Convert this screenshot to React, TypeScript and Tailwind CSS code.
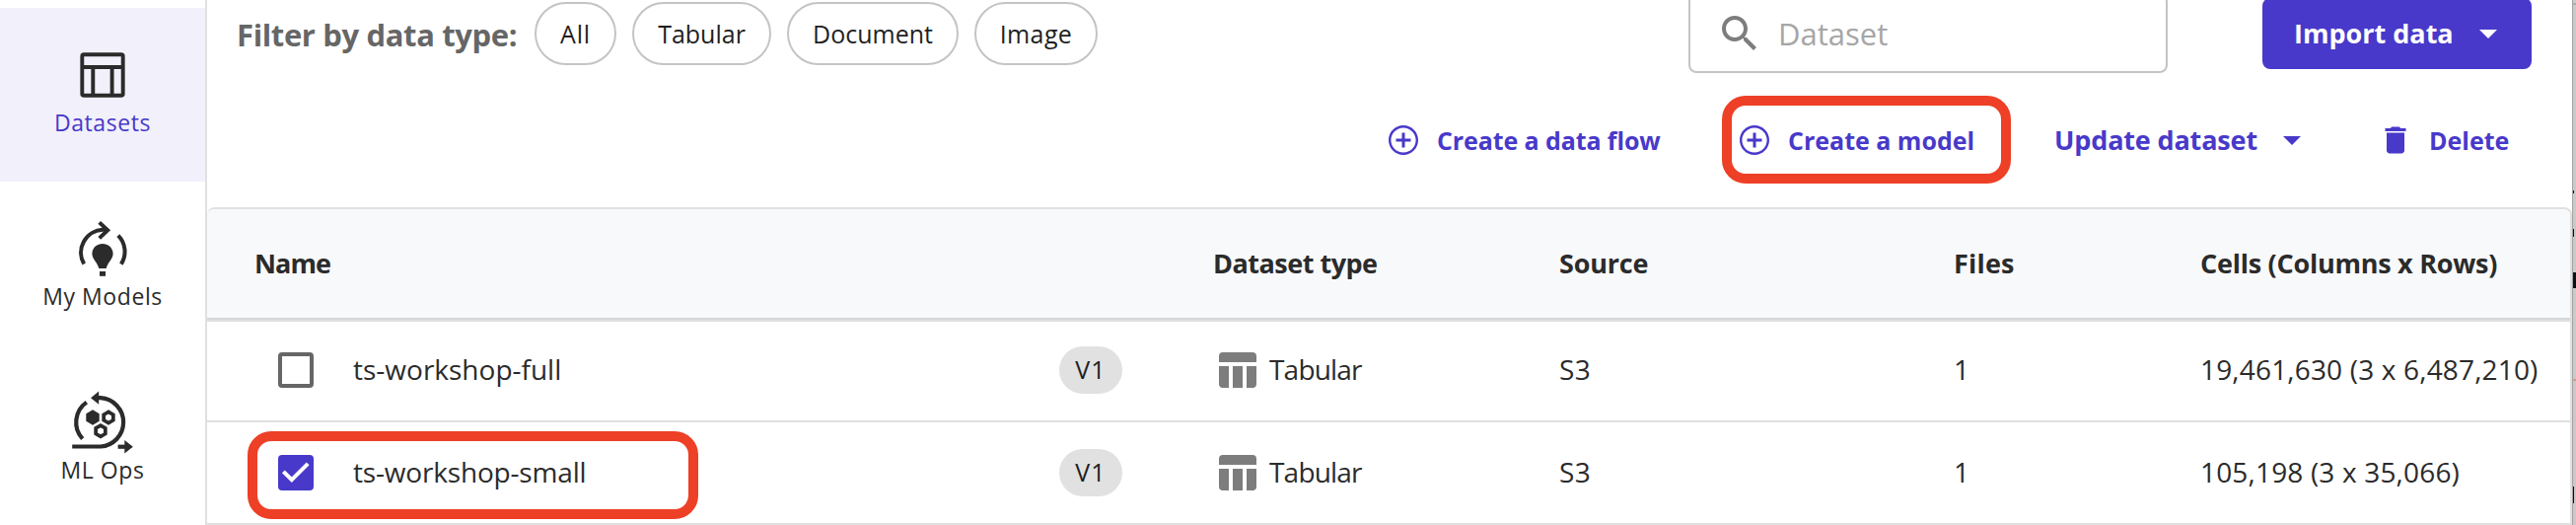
import type { ReactNode } from 'react';

function DatasetsIcon() {
  return (
    <svg className="size-16 shrink-0" viewBox="0 0 64 64" fill="none" stroke="#2b2b2b" strokeWidth="3.9">
      <rect x="11.3" y="11.2" width="41.4" height="41.6" rx="1.8" />
      <path d="M11 24H53M22.3 24V53M41.6 24V53" />
    </svg>
  );
}

function ModelsIcon() {
  return (
    <svg className="size-16 shrink-0" viewBox="0 0 64 64" fill="none" stroke="#2b2b2b" strokeWidth="4">
      <path d="M13.2 47.6A23.2 23.2 0 0 1 32 12.8H37" />
      <path d="M28.7 5.4L37.2 13.3L28.7 21.4" />
      <path d="M47.8 18.6A23.2 23.2 0 0 1 50.8 47.6" />
      <path
        d="M32 27C26 27 21.4 31.4 21.4 37.3C21.4 42.5 26.6 45.6 28.3 51.9H35.7C37.4 45.6 42.6 42.5 42.6 37.3C42.6 31.4 38 27 32 27Z"
        fill="#2b2b2b"
        stroke="none"
      />
      <rect x="29" y="55" width="6" height="4.8" fill="#2b2b2b" stroke="none" />
    </svg>
  );
}

function OpsIcon() {
  return (
    <svg className="size-16 shrink-0 overflow-visible" viewBox="0 0 64 64" fill="none" stroke="#2b2b2b" strokeWidth="4.2">
      <path d="M1.2 56.5H30A24.7 24.7 0 0 0 30 7.2H25" />
      <path d="M20 7.2L28.2 .6V13.8Z" fill="#2b2b2b" stroke="none" />
      <path d="M15.8 11.6A24.7 24.7 0 0 0 11.7 48.6" />
      <path d="M47.6 56.7H56" />
      <path d="M62.8 56.7L54.3 49.9V63.5Z" fill="#2b2b2b" stroke="none" />
      <path d="M22 19.3L28.7 23.15V30.85L22 34.7L15.3 30.85V23.15Z" fill="#2b2b2b" stroke="none" />
      <path d="M38 21.4L42.85 24.2V29.8L38 32.6L33.15 29.8V24.2Z" strokeWidth="3.7" />
      <path d="M30 35.1L34.85 37.9V43.5L30 46.3L25.15 43.5V37.9Z" strokeWidth="3.7" />
    </svg>
  );
}

function PlusCircle() {
  return (
    <svg className="size-9 shrink-0" viewBox="0 0 24 24" fill="currentColor">
      <path d="M13 7h-2v4H7v2h4v4h2v-4h4v-2h-4V7zm-1-5C6.48 2 2 6.48 2 12s4.48 10 10 10 10-4.48 10-10S17.52 2 12 2zm0 18.4c-4.63 0-8.4-3.77-8.4-8.4s3.77-8.4 8.4-8.4 8.4 3.77 8.4 8.4-3.77 8.4-8.4 8.4z" />
    </svg>
  );
}

function Caret() {
  return (
    <svg className="h-[9px] w-[18px] shrink-0" viewBox="0 0 18 9" fill="currentColor">
      <path d="M0 0H18L9 9Z" />
    </svg>
  );
}

function TableIcon() {
  return (
    <svg className="h-9 w-[38px] shrink-0" viewBox="0 0 38 36" fill="#7d7d7d">
      <path d="M4 0H34A4 4 0 0 1 38 4V10H0V4A4 4 0 0 1 4 0ZM0 14H10V36H4A4 4 0 0 1 0 32ZM14 14H24V36H14ZM28 14H38V32A4 4 0 0 1 34 36H28Z" />
    </svg>
  );
}

function NavItem({ icon, label, active = false }: { icon: ReactNode; label: string; active?: boolean }) {
  return (
    <a
      className={`flex h-[176px] flex-col items-center pt-9 text-[23px] leading-8 tracking-[0.58px] ${
        active ? 'bg-[#f2f0fa] text-[#4839ca]' : 'text-[#2b2b2b]'
      }`}
    >
      {icon}
      <span>{label}</span>
    </a>
  );
}

function Row({ name, cells, checked = false, first = false }: { name: string; cells: string; checked?: boolean; first?: boolean }) {
  return (
    <div
      className={`relative grid h-[104px] grid-cols-[1020px_351px_400px_250px_1fr] items-center border-b-2 border-[#e0e0e0] text-[28px] leading-9 text-[#2b2b2b] ${
        first ? 'shadow-[inset_0_2px_0_#e0e0e0]' : ''
      }`}
    >
      <div className="flex items-center pl-[72px]">
        {checked ? (
          <span className="flex size-9 items-center justify-center rounded-[4px] bg-[#4839ca]">
            <svg className="size-9" viewBox="0 0 36 36" fill="none" stroke="#fff" strokeWidth="4">
              <path d="M5.4 16.8L13.8 25.2L30.2 8.8" />
            </svg>
          </span>
        ) : (
          <span className="size-9 rounded-[4px] border-4 border-[#666]" />
        )}
        <span className={`ml-10 pb-0.5 ${checked ? 'tracking-[-0.18px]' : ''}`}>{name}</span>
        <span className="mr-[92px] ml-auto flex h-12 w-16 items-center justify-center rounded-full bg-[#e1e1e1] pb-0.5 text-[25px] tracking-[1.2px] text-[#1f1f1f]">
          V1
        </span>
      </div>
      <div className="flex items-center gap-[13px] pl-1.5">
        <TableIcon />
        <span className="pb-0.5 tracking-[-0.8px]">Tabular</span>
      </div>
      <span className="pb-0.5 tracking-[0.5px]">S3</span>
      <span className="pb-0.5">1</span>
      <span className="pb-0.5 whitespace-nowrap tracking-[0.17px]">{cells}</span>
      {checked && <span className="absolute top-[9px] left-[41px] h-[89px] w-[457px] rounded-3xl border-10 border-[#ed4026]" />}
    </div>
  );
}

export default function App() {
  return (
    <div className="flex h-[532px] w-[2612px] overflow-hidden bg-white font-['Open_Sans','Noto_Sans',sans-serif]">
      <nav className="w-[210px] shrink-0 border-r-2 border-[#e0e0e0] pt-2">
        <NavItem icon={<DatasetsIcon />} label="Datasets" active />
        <NavItem icon={<ModelsIcon />} label="My Models" />
        <NavItem icon={<OpsIcon />} label="ML Ops" />
      </nav>

      <main className="flex w-[2398px] shrink-0 flex-col">
        <div className="-mt-1.5 flex h-20 shrink-0 items-center pr-[41px] pl-[30px]">
          <span className="w-[302px] pt-px text-[31px] leading-10 font-bold tracking-[-0.37px] whitespace-nowrap text-[#666]">
            Filter by data type:
          </span>
          <div className="flex gap-4 text-[25px] text-[#1f1f1f]">
            <span className="flex h-16 w-[83px] items-center justify-center rounded-full border-2 border-[#c4c4c4] pt-0.5 tracking-[0.8px]">All</span>
            <span className="flex h-16 w-[141px] items-center justify-center rounded-full border-2 border-[#c4c4c4] pt-0.5">Tabular</span>
            <span className="flex h-16 w-[174px] items-center justify-center rounded-full border-2 border-[#c4c4c4] pt-0.5">Document</span>
            <span className="flex h-16 w-[125px] items-center justify-center rounded-full border-2 border-[#c4c4c4] pt-0.5 tracking-[0.4px]">Image</span>
          </div>
          <div className="ml-auto flex h-20 w-[486px] items-center gap-[15px] rounded-lg border-2 border-[#c4c4c4] pl-[26px]">
            <svg className="size-12 shrink-0" viewBox="0 0 24 24" fill="#7d7d7d">
              <path d="M15.5 14h-.79l-.28-.27C15.41 12.59 16 11.11 16 9.5 16 5.91 13.09 3 9.5 3S3 5.91 3 9.5 5.91 16 9.5 16c1.61 0 3.09-.59 4.23-1.57l.27.28v.79l5 4.99L20.49 19l-4.99-5zm-6 0C7.01 14 5 11.99 5 9.5S7.01 5 9.5 5 14 7.01 14 9.5 11.99 14 9.5 14z" />
            </svg>
            <span className="text-[31px] text-[#a6a6a6]">Dataset</span>
          </div>
          <button className="ml-24 flex h-[72px] w-[273px] items-center justify-between rounded-lg bg-[#4839ca] pt-px pr-[35px] pl-8 text-[27px] font-bold text-white">
            Import data
            <Caret />
          </button>
        </div>

        <div className="flex h-[136px] shrink-0 items-center pl-[1195px] text-[25px] leading-9 font-bold whitespace-nowrap text-[#4839ca]">
          <button className="flex w-[356px] items-center gap-4">
            <PlusCircle />
            <span className="pb-px tracking-[-0.1px]">Create a data flow</span>
          </button>
          <button className="relative flex w-[322px] items-center gap-4">
            <PlusCircle />
            <span className="pb-px">Create a model</span>
            <span className="absolute -top-[27px] -left-[15px] h-[89px] w-[293px] rounded-3xl border-10 border-[#ed4026]" />
          </button>
          <button className="flex w-[328px] items-center text-[27px]">
            <span className="w-[232px] text-left tracking-[-0.15px]">Update dataset</span>
            <Caret />
          </button>
          <button className="flex items-center gap-4">
            <svg className="size-9 shrink-0" viewBox="0 0 24 24" fill="currentColor">
              <path d="M6 19c0 1.1.9 2 2 2h8c1.1 0 2-.9 2-2V7H6v12zM19 4h-3.5l-1-1h-5l-1 1H5v2h14V4z" />
            </svg>
            <span className="pb-px">Delete</span>
          </button>
        </div>

        <section className="h-[322px] shrink-0 overflow-hidden rounded-t-lg border-t-2 border-r-2 border-[#e0e0e0]">
          <div className="grid h-28 grid-cols-[1020px_351px_400px_250px_1fr] items-center border-b-2 border-[#d6d7da] bg-[#f8f9fb] text-[27px] leading-9 font-bold whitespace-nowrap text-[#2b2b2b]">
            <span className="pl-12 tracking-[-0.9px]">Name</span>
            <span className="tracking-[-0.5px]">Dataset type</span>
            <span className="tracking-[-0.2px]">Source</span>
            <span className="tracking-[0.2px]">Files</span>
            <span className="tracking-[-0.25px]">Cells (Columns x Rows)</span>
          </div>
          <Row name="ts-workshop-full" cells="19,461,630 (3 x 6,487,210)" first />
          <Row name="ts-workshop-small" cells="105,198 (3 x 35,066)" checked />
        </section>
      </main>

      <aside className="flex w-1 shrink-0 flex-col border-l border-[#a3a3a3] bg-[#cbcac9]">
        <span className="mt-[3px] h-0.5 bg-[#a9b0b0]" />
        <span className="mt-[188px] h-[3px] w-px bg-[#111]" />
        <span className="mt-9 h-2 w-px bg-[#111]" />
        <span className="mt-9 h-4 bg-[#111]" />
        <span className="mt-[92px] h-0.5 bg-[#d59c92]" />
        <div className="flex-1 bg-[#d0c6c7] pt-[107px]">
          <span className="block h-[17px] w-px bg-[#0b0b14]" />
        </div>
      </aside>
    </div>
  );
}
